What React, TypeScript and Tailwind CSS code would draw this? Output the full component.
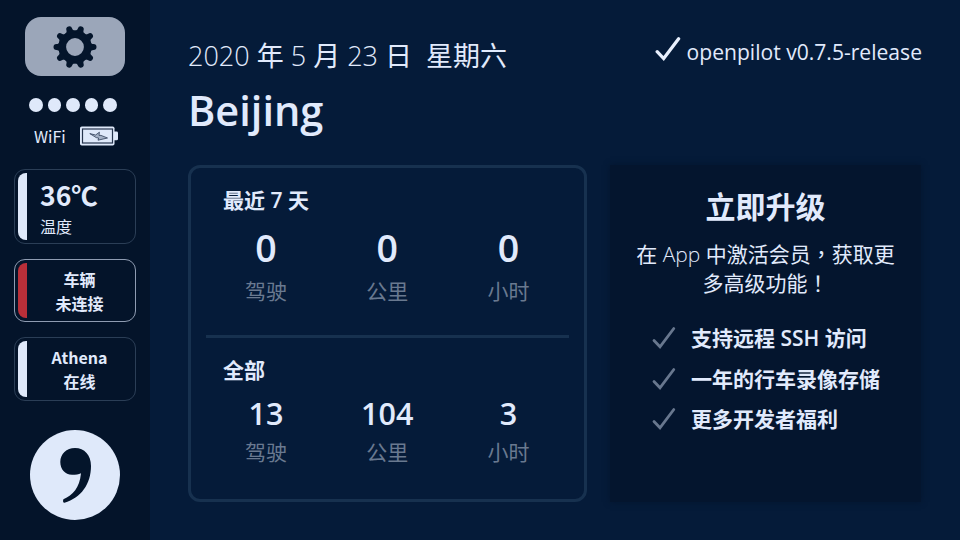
import type { ReactNode } from "react";

const SANS = "font-['Open_Sans','Noto_Sans_CJK_SC',sans-serif]";
const CJK = "font-['Noto_Sans_CJK_SC',sans-serif]";

function Gear() {
  return (
    <svg width="44" height="44" viewBox="-22 -22 44 44">
      <circle r="12.8" fill="none" stroke="#04152b" strokeWidth="7.8" />
      {[18, 54, 90, 126, 162, 198, 234, 270, 306, 342].map((a) => (
        <g key={a} transform={`rotate(${a - 90})`}>
          <path d="M14 -5.8 C16 -3.6 17 -3.1 18.5 -3 A3 3 0 0 1 18.5 3 C17 3.1 16 3.6 14 5.8Z" fill="#04152b" />
        </g>
      ))}
    </svg>
  );
}

function Battery() {
  return (
    <svg width="38" height="20" viewBox="0 0 38 20">
      <rect x="0" y="0.5" width="34.5" height="19" rx="1.8" fill="#dfe9fa" />
      <path d="M34 5.5h2.6a1.4 1.4 0 0 1 1.4 1.4v6a1.4 1.4 0 0 1-1.4 1.4H34z" fill="#dfe9fa" />
      <rect x="2.5" y="3" width="30" height="14" fill="#dfe9fa" stroke="#26344d" strokeWidth="1.2" />
      <path d="M9.8 7.6 L16.2 11.6 L18.6 12 L18 14.2 L27.5 12 L21 9.4 L19 9.4 L19.4 6.2 L15.6 9 Z" fill="#a4b1c6" stroke="#2e3e58" strokeWidth="0.8" />
    </svg>
  );
}

function Check({ size, color, width }: { size: number; color: string; width: number }) {
  return (
    <svg width={size} height={size} viewBox="0 0 24 24" className="shrink-0">
      <path d="M2 14.5 L8 20.8 L21.8 2.5" fill="none" stroke={color} strokeWidth={width} strokeLinecap="round" />
    </svg>
  );
}

function Status({ className, bar, children }: { className: string; bar: string; children: ReactNode }) {
  return (
    <div className={`flex w-[122px] rounded-[11px] border-[1.5px] p-[3px] ${className}`}>
      <div className={`w-[9px] shrink-0 rounded-l-[8px] ${bar}`} />
      {children}
    </div>
  );
}

function Stats({ values, className }: { values: string[]; className: string }) {
  const labels = ["驾驶", "公里", "小时"];
  return (
    <div className="-ml-[0.6px] grid w-[363.6px] grid-cols-3">
      {values.map((v, i) => (
        <div key={labels[i]} className="flex flex-col items-center">
          <div className={`text-[#e1eafc] ${className}`}>{v}</div>
          <div className="text-[21px] leading-[30px] text-[#697990]">{labels[i]}</div>
        </div>
      ))}
    </div>
  );
}

export default function App() {
  const features: ReactNode[] = [
    <>支持远程 <span className="font-semibold">SSH</span> 访问</>,
    "一年的行车录像存储",
    "更多开发者福利",
  ];
  return (
    <div className={`flex h-[540px] w-[960px] overflow-hidden bg-[#051b39] text-[#e1eafc] ${SANS}`}>
      <aside className={`flex w-[150px] shrink-0 flex-col items-center bg-[#04142a] pt-[17px] ${CJK}`}>
        <div className="flex h-[59px] w-[100px] items-center justify-center rounded-[16px] bg-[#9ba6b9]">
          <Gear />
        </div>
        <div className="mt-[22px] mr-[4px] flex gap-[5px]">
          {[0, 1, 2, 3, 4].map((i) => (
            <span key={i} className="size-[13.6px] rounded-full bg-[#dfe9fa]" />
          ))}
        </div>
        <div className="mt-[12.4px] flex h-[24px] w-[150px] items-center pl-[34px]">
          <span className="w-[46px] text-[16px] leading-6">WiFi</span>
          <Battery />
        </div>
        <Status className="mt-[21px] h-[75px] border-[#2b3e56]" bar="bg-[#dfe9fa]">
          <div className="flex flex-col pl-[13px]">
            <div className="mt-[4px] h-[36px] text-[26.5px] leading-[36px] font-bold">36℃</div>
            <div className="mt-[1px] text-[16px] leading-[24px]">温度</div>
          </div>
        </Status>
        <Status className="mt-[15px] h-[63px] border-[#8f9cb2]" bar="bg-[#b92f39]">
          <div className="flex-1 pt-[4px] text-center text-[16px] leading-[24px] font-bold">车辆<br />未连接</div>
        </Status>
        <Status className="mt-[15px] h-[64px] border-[#2b3e56]" bar="bg-[#dfe9fa]">
          <div className="flex-1 pt-[4px] text-center text-[16px] leading-[24px] font-bold">Athena<br />在线</div>
        </Status>
        <svg width="90" height="90" viewBox="0 0 90 90" className="mt-[29px]">
          <circle cx="45" cy="45" r="45" fill="#dfe9fa" />
          <path d="M45 18 C54.5 18 61 25 61 36 C61 54 51 68 34.5 72.7 C33.2 73 32.6 71 33.4 69.2 C43 65 49.5 58 51 43.2 C48.5 44.2 46 44.8 42 44.8 C35 44.8 30.3 39 30.3 32 C30.3 24 36.5 18 45 18Z" fill="#04152b" />
        </svg>
      </aside>

      <main className="flex flex-1 flex-col pl-[38px]">
        <header className="flex h-[165px] justify-between pr-[38px]">
          <div className="pt-[37px]">
            <div className="flex h-[38px] items-center text-[27px] leading-[38px] font-light whitespace-pre">
              <span>2020 <span className="font-normal">年</span> 5 <span className="font-normal">月</span> 23 <span className="font-normal">日</span>  <span className="font-normal">星期六</span></span>
            </div>
            <div className="mt-[9px] text-[41.5px] leading-[52px] font-semibold">Beijing</div>
          </div>
          <div className="mt-[36px] flex h-[32px] items-center">
            <div className="mr-[6px] pb-[6px]"><Check size={26} color="#e8effd" width={3} /></div>
            <span className="text-[21.1px] leading-[32px]">openpilot v0.7.5-release</span>
          </div>
        </header>

        <div className="flex gap-[23px]">
          <section className="h-[337px] w-[399px] rounded-[12px] border-[3px] border-[#17314f] px-[15px]">
            <div className="flex h-[167px] flex-col">
              <h2 className="mt-[16px] pl-[17px] text-[21px] leading-[32px] font-bold">最近 <span className="font-semibold">7</span> 天</h2>
              <Stats values={["0", "0", "0"]} className="h-[60px] text-[37.5px] leading-[64px] font-semibold" />
            </div>
            <div className="h-[3px] w-[363px] bg-[#17314f]" />
            <h2 className="mt-[16px] pl-[17px] text-[21px] leading-[32px] font-bold">全部</h2>
            <Stats values={["13", "104", "3"]} className="h-[51px] text-[30.5px] leading-[55px] font-semibold" />
          </section>

          <section className="flex h-[337px] w-[311px] flex-col items-center bg-[#04152e] pt-[20px] shadow-[0_0_6px_#04152e]">
            <h1 className="text-[30px] leading-[44px] font-bold">立即升级</h1>
            <p className="mt-[10px] text-center text-[21px] leading-[28px] whitespace-nowrap">
              在 <span className="font-light">App</span> 中激活会员<span className="font-['Noto_Sans_CJK_TC',sans-serif]">，</span>获取更<br />
              多高级功能<span className="font-['Noto_Sans_CJK_TC',sans-serif]">！</span>
            </p>
            <ul className="mt-[21px] flex w-[311px] flex-col pl-[42px]">
              {features.map((f, i) => (
                <li key={i} className="flex h-[40.5px] items-center gap-[15px] text-[21px] leading-[32px] font-bold">
                  <Check size={24} color="#68778e" width={2.8} />
                  <span>{f}</span>
                </li>
              ))}
            </ul>
          </section>
        </div>
      </main>
    </div>
  );
}
